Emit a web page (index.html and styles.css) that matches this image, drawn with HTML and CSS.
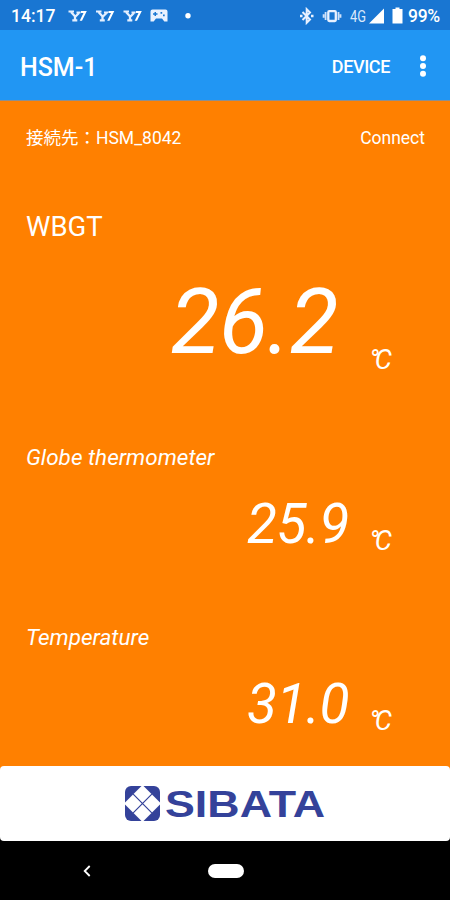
FILE: index.html
```html
<!DOCTYPE html>
<html lang="ja">
<head>
    <meta charset="UTF-8">
    <meta name="viewport" content="width=device-width, initial-scale=1.0">
    <title>HSM-1</title>
    <link rel="stylesheet" href="styles.css">
</head>
<body>
    <div class="status-bar">
        <span class="clock">14:17</span>
        <svg class="status-left" width="124" height="16" viewBox="0 0 124 16">
            <defs>
                <g id="news">
                    <path d="M0 3.500h5.500M8 4.500h4" fill="none" stroke="#e4efff" stroke-width="1.800"/>
                    <path d="M2.500 4l4.300 4.700L10.500 5M6.500 8v4.500M3.800 12.300h5" fill="none" stroke="#e4efff" stroke-width="2.300"/>
                    <path d="M12.500 3h5.800l-4.800 9.800h-2.300L15 5h-2.700z" fill="#fff"/>
                </g>
            </defs>
            <use href="#news" x=".5"/>
            <use href="#news" x="28"/>
            <use href="#news" x="55.500"/>
            <path fill="#e9f1ff" fill-rule="evenodd" d="M84.500 1.500h13q2 0 2 2v10h-3.200l-2.300-3h-6l-2.300 3h-3.200v-10q0-2 2-2zM86.500 4v1.300h-1.500v1.500h1.500v1.300h1.500v-1.300h1.500v-1.500h-1.500v-1.300zM92.500 4v1.700h1.700v-1.700zM95 6.500v1.700h1.700v-1.700z"/>
            <circle cx="120" cy="7.800" r="2.700" fill="#fff"/>
        </svg>
        <svg class="status-right" width="105" height="18" viewBox="0 0 105 18">
            <path d="M2.500 5l7.500 7.500-3.300 3.300V2.200L10 5.500l-7.500 7.500" fill="none" stroke="#e9f1ff" stroke-width="2"/>
            <path d="M0 7.700h2.500v2.500H0zM11 7.700h2.500v2.500H11z" fill="#e9f1ff"/>
            <rect x="28.300" y="4.200" width="7.500" height="9.800" rx="1" fill="none" stroke="#e9f1ff" stroke-width="2.300"/>
            <path d="M25.600 5v8M38.500 5v8M23.600 7.300v3.500M40.500 7.300v3.500" stroke="#cfe2fa" stroke-width="1.800"/>
            <text class="network" x="50" y="14.500" textLength="16" lengthAdjust="spacingAndGlyphs">4G</text>
            <path d="M84 1.500v15H69z" fill="#fff"/>
            <path d="M95.500 .5h4V2h3v14.500h-10V2h3z" fill="#fff"/>
        </svg>
        <span class="battery">99%</span>
    </div>

    <div class="toolbar">
        <h1>HSM-1</h1>
        <span class="device">DEVICE</span>
        <svg class="more" width="8" height="24" viewBox="0 0 8 24" fill="#fff">
            <circle cx="4" cy="4.300" r="3"/>
            <circle cx="4" cy="12" r="3"/>
            <circle cx="4" cy="19.700" r="3"/>
        </svg>
    </div>

    <main>
        <div class="connection">
            <span class="target">接続先：HSM_8042</span>
            <span class="connect">Connect</span>
        </div>
        <section class="reading main-reading">
            <h2>WBGT</h2>
            <div class="value-row">
                <span class="value">26.2</span>
                <span class="unit">°C</span>
            </div>
        </section>
        <section class="reading">
            <h2>Globe thermometer</h2>
            <div class="value-row">
                <span class="value">25.9</span>
                <span class="unit">°C</span>
            </div>
        </section>
        <section class="reading">
            <h2>Temperature</h2>
            <div class="value-row">
                <span class="value">31.0</span>
                <span class="unit">°C</span>
            </div>
        </section>
    </main>

    <div class="brand">
        <svg width="206" height="38" viewBox="-2 0 206 38">
            <rect x="1" y="1" width="35" height="35" rx="6" fill="#34429a"/>
            <path d="M18.500 0L37 18.500 18.500 37 0 18.500z" fill="#fff"/>
            <path d="M9.200 9.200l18.600 18.600M27.800 9.200L9.200 27.800" stroke="#34429a" stroke-width="1.200"/>
            <text class="brand-name" x="41" y="31.500" textLength="160" lengthAdjust="spacingAndGlyphs">SIBATA</text>
        </svg>
    </div>

    <div class="nav-bar">
        <svg width="10" height="14" viewBox="0 0 10 14">
            <path d="M7.700 2L2.700 7l5 5" fill="none" stroke="#fff" stroke-width="1.800"/>
        </svg>
        <div class="home"></div>
    </div>
</body>
</html>
```
FILE: styles.css
```css
* {
    box-sizing: border-box;
}

body {
    margin: 0;
    height: 900px;
    display: flex;
    flex-direction: column;
    background-color: #000;
    color: #fff;
    font-family: Roboto, "Noto Sans CJK JP", sans-serif;
    overflow: hidden;
}

h1, h2 {
    margin: 0;
}

.status-bar {
    height: 30px;
    display: flex;
    align-items: center;
    padding: 2px 0 0 11px;
    background-color: #1976d2;
}

.clock {
    width: 57px;
    font-size: 17.500px;
    font-weight: 500;
}

.status-right {
    margin-left: 108px;
}

.network {
    font-size: 16px;
    fill: #dce9fb;
}

.battery {
    margin-left: 3px;
    font-size: 17.500px;
    font-weight: 500;
    letter-spacing: -0.300px;
}

.toolbar {
    height: 71px;
    display: flex;
    align-items: center;
    padding: 2px 23px 0 20px;
    background-color: #2196f3;
    border-bottom: 1px solid #8d8e8d;
}

.toolbar h1 {
    flex: 1;
    padding-top: 2px;
    font-size: 25px;
    font-weight: 500;
}

.device {
    font-size: 18px;
    font-weight: 500;
    letter-spacing: -0.400px;
}

.more {
    margin-left: 29px;
}

main {
    height: 669px;
    padding: 24px 25px 0 26px;
    background-color: #ff8000;
}

.connection {
    display: flex;
    justify-content: space-between;
    height: 85px;
    font-size: 17.500px;
    line-height: 26px;
}

.reading {
    height: 180px;
}

.reading h2 {
    height: 34px;
    font-size: 22.500px;
    font-style: italic;
    font-weight: 400;
    line-height: 34px;
}

.value-row {
    display: flex;
    justify-content: flex-end;
    align-items: baseline;
    padding-right: 31px;
}

.value {
    margin-top: 17px;
    font-size: 55px;
    font-style: italic;
    letter-spacing: -0.500px;
    line-height: 66px;
}

.unit {
    width: 25px;
    margin-left: 20px;
    font-size: 27px;
    font-style: italic;
    letter-spacing: -4px;
    line-height: 30px;
    transform: translateY(7px);
}

.main-reading {
    height: 230px;
}

.main-reading h2 {
    font-size: 27.500px;
    font-style: normal;
}

.main-reading .value {
    margin-top: 26px;
    font-size: 90px;
    letter-spacing: -0.700px;
    line-height: 106px;
}

.main-reading .unit {
    margin-left: 31px;
    transform: translateY(16px);
}

.brand {
    height: 75px;
    margin-top: -4px;
    display: flex;
    justify-content: center;
    align-items: center;
    background-color: #fff;
    border-radius: 4px;
}

.brand-name {
    font-family: "Liberation Sans", sans-serif;
    font-size: 37px;
    font-weight: 700;
    fill: #34429a;
}

.nav-bar {
    height: 59px;
    display: flex;
    align-items: center;
    padding-left: 82px;
}

.home {
    width: 36px;
    height: 14px;
    margin-left: 116px;
    border-radius: 7px;
    background-color: #fff;
}
```
